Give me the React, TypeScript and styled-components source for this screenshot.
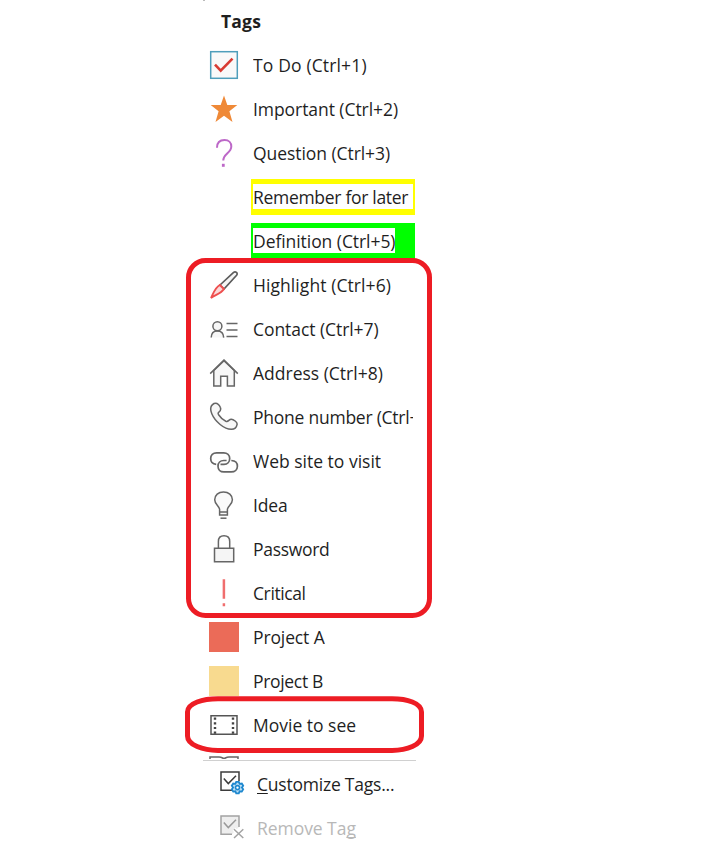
import React from "react";
import styled, { createGlobalStyle } from "styled-components";

const GlobalStyle = createGlobalStyle`
  body {
    margin: 0;
    background: #fff;
    overflow: hidden;
  }
`;

const Page = styled.main`
  position: relative;
  box-sizing: border-box;
  width: 723px;
  height: 868px;
  padding-left: 203px;
  background: #fff;
  color: #1f1f1f;
  font: 17.5px/24px "Open Sans", "Noto Sans", sans-serif;
`;

const Menu = styled.section`
  display: flex;
  flex-direction: column;
  width: 213px;
`;

const Heading = styled.h2`
  height: 43px;
  margin: 0;
  padding-left: 18px;
  font-size: 17.5px;
  font-weight: 700;
  letter-spacing: 0.2px;
  line-height: 43px;
`;

const TagList = styled.ul`
  height: 716px;
  margin: 0;
  padding: 0 0 0 6px;
  overflow: hidden;
  list-style: none;
`;

const TagRow = styled.li`
  display: grid;
  grid-template-columns: 30px 1fr;
  column-gap: 12px;
  align-items: center;
  height: 44px;
`;

const Icon = styled.svg`
  display: block;
  width: 30px;
  height: 30px;
  fill: none;
  stroke: #666;
  stroke-width: 1.5;
`;

const LabelBox = styled.div<{ $marker?: string }>`
  display: flex;
  align-items: flex-start;
  box-sizing: border-box;
  width: 164px;
  height: 36px;
  padding: 5px 2px 0;
  overflow: hidden;
  background: ${(p) => p.$marker ?? "transparent"};
`;

const Label = styled.span<{ $spacing: number; $wide?: boolean }>`
  box-sizing: border-box;
  flex: ${(p) => (p.$wide ? "1 0 160px" : "0 0 auto")};
  max-width: 160px;
  height: 25px;
  overflow: hidden;
  background: #fff;
  letter-spacing: ${(p) => p.$spacing}px;
  line-height: 26px;
  white-space: nowrap;
`;

const Swatch = styled.span<{ $color: string }>`
  width: 30px;
  height: 30px;
  background: ${(p) => p.$color};
`;

const Divider = styled.hr`
  width: 100%;
  height: 1px;
  margin: 1px 0 0;
  border: 0;
  background: #d0d0d0;
`;

const Action = styled.div<{ $disabled?: boolean }>`
  display: flex;
  align-items: center;
  gap: 12px;
  height: 44px;
  padding-left: 16px;
  color: ${(p) => (p.$disabled ? "#b8b8b8" : "#1f1f1f")};
  letter-spacing: ${(p) => (p.$disabled ? -0.05 : -0.22)}px;
  white-space: nowrap;
`;

const ActionText = styled.span`
  padding-top: 1px;
`;

const AccessKey = styled.span`
  text-decoration: underline;
  text-decoration-thickness: 1px;
  text-underline-offset: 2px;
  text-decoration-skip-ink: none;
`;

const ActionIcon = styled.svg`
  display: block;
  width: 26px;
  height: 26px;
  fill: none;
`;

const Frames = styled.svg`
  position: absolute;
  left: 0;
  top: 0;
  width: 723px;
  height: 868px;
  fill: none;
  stroke: #ed1c24;
  stroke-width: 5;
  pointer-events: none;
`;

const Speck = styled.i`
  position: absolute;
  left: 203px;
  top: 0;
  width: 2px;
  height: 1px;
  background: #bbb;
`;

const TodoIcon = () => (
  <Icon viewBox="0 0 30 30">
    <rect x="1.7" y="1.7" width="26.6" height="26.6" fill="#f9f9f9" stroke="#4e9ebb" />
    <path d="M6 14.7 11.7 20.7 23.5 8.6" stroke="#d83b33" strokeWidth="2.6" />
  </Icon>
);

const StarIcon = () => (
  <Icon viewBox="0 0 30 30">
    <path d="M15 1.5 18.3 11H28.3L20.4 17.2 23.5 28 15 21.7 6.5 28 9.6 17.2 1.7 11H11.7Z" fill="#ef8937" stroke="none" />
  </Icon>
);

const QuestionIcon = () => (
  <Icon viewBox="0 0 30 30">
    <g stroke="#bd68c8" strokeWidth="2">
      <path d="M8 9.7C8 4.8 10.9 2 15.5 2C20 2 22.3 4.8 22.3 8.4C22.3 15 14.3 15.4 14.3 22.5" />
      <path d="M14.3 25.8V28.8" strokeWidth="2.8" />
    </g>
  </Icon>
);

const HighlightIcon = () => (
  <Icon viewBox="0 0 30 30">
    <path d="M11 15 24.6 2.4C26.4.9 29.4 3 27.6 5.2L15 19Z" fill="#f5f5f5" stroke="#5c5c5c" strokeWidth="1.7" />
    <path d="M10.8 15 14.9 19C12.6 23.2 6.6 24.8 2 27.9C4.4 23.4 6 17.6 10.8 15Z" fill="#fbd9d9" stroke="#ee4f4f" strokeWidth="1.9" />
  </Icon>
);

const ContactIcon = () => (
  <Icon viewBox="0 0 30 30">
    <path d="M2.2 23.6C2.3 19.3 4.7 16.9 8.3 16.9S14.5 19.3 14.7 23.6" fill="#f7f7f7" />
    <circle cx="8.4" cy="12.2" r="4.5" fill="#f7f7f7" />
    <path d="M17.5 9.5H28.5M17.5 16H28.5M17.5 22.5H28.5" />
  </Icon>
);

const HomeIcon = () => (
  <Icon viewBox="0 0 30 30">
    <path d="M4.8 12.5V28H11.7V18.3H18.4V28H25.3V12.5L15 2.6Z" fill="#f7f7f7" />
    <path d="M1.2 15.6 15 2.1 28.8 15.6" />
  </Icon>
);

const PhoneIcon = () => (
  <Icon viewBox="0 0 30 30">
    <path d="M5 1.5C7.5.5 10 2.4 11.3 5.3C12.6 8 11 9.2 9.7 10.3C8.8 11 9.1 12 9.8 13C11.7 15.9 14.2 18.1 16.8 19.2C19.6 20.3 19.7 17.2 22.3 17.2C24.4 17.2 28.5 20.2 28.1 22.3C27.6 25 25.5 27.4 22.2 27.3C15.3 27.3 6 19.6 2.8 11.8C.7 6.6 1.5 3.4 5 1.5Z" fill="#f7f7f7" />
  </Icon>
);

const LinkIcon = () => (
  <Icon viewBox="0 0 30 30">
    <g strokeWidth="1.7">
      <path d="M7.2 18.4C4 18.2 1.7 16 1.7 12.6S4 6.8 7.6 6.8H14.7C18.2 6.8 20.7 9.2 20.7 12.6C20.7 15.9 18.5 18.4 15 18.4H11.5" />
      <path d="M17.6 14.5H14.8C11.3 14.5 9 16.9 9 20.2S11.3 25.9 14.8 25.9H22.2C25.9 25.9 28.4 23.5 28.4 20.2C28.4 17 26 14.7 22.3 14.5" />
    </g>
  </Icon>
);

const IdeaIcon = () => (
  <Icon viewBox="0 0 30 30">
    <path d="M10.6 22V19.2C10.1 16 5.7 14.3 5.7 9.8C5.7 5.1 9.4 1.9 14.5 1.9S23.4 5.1 23.4 9.8C23.4 14.3 18.9 16 18.4 19.2V25H10.6V22H18.4" fill="#fafafa" />
    <path d="M11.5 28.2H17.5" />
  </Icon>
);

const LockIcon = () => (
  <Icon viewBox="0 0 30 30">
    <path d="M9.4 14V7.4C9.4 3.6 11.5 1.7 15 1.7S20.7 3.6 20.7 7.4V14" />
    <path d="M5.5 14.3H24.7V27.8H5.5Z" fill="#f5f5f5" />
  </Icon>
);

const CriticalIcon = () => (
  <Icon viewBox="0 0 30 30">
    <path d="M14.9 1.3V20.8M14.9 25.3V28.3" stroke="#f06e6e" strokeWidth="2.5" />
  </Icon>
);

const MovieIcon = () => (
  <Icon viewBox="0 0 30 30">
    <path d="M2 5.7H28V24.3H2Z" stroke="#555" />
    <path d="M6 7.5V24M24 7.5V24" stroke="#444" strokeWidth="2.4" strokeDasharray="2.2 2.5" />
  </Icon>
);

const BookIcon = () => (
  <Icon viewBox="0 0 30 30">
    <path d="M1 15V3H10C13 3 13.8 4.5 15 4.5S17 3 20 3H29V15" />
  </Icon>
);

type Tag = {
  label: string;
  spacing: number;
  icon?: React.ReactNode;
  marker?: string;
  wide?: boolean;
};

const tags: Tag[] = [
  { label: "To Do (Ctrl+1)", spacing: 0.15, icon: <TodoIcon /> },
  { label: "Important (Ctrl+2)", spacing: -0.06, icon: <StarIcon /> },
  { label: "Question (Ctrl+3)", spacing: -0.06, icon: <QuestionIcon /> },
  { label: "Remember for later", spacing: -0.3, marker: "#ffff00", wide: true },
  { label: "Definition (Ctrl+5)", spacing: -0.06, marker: "#00ff00" },
  { label: "Highlight (Ctrl+6)", spacing: 0.08, icon: <HighlightIcon /> },
  { label: "Contact (Ctrl+7)", spacing: -0.06, icon: <ContactIcon /> },
  { label: "Address (Ctrl+8)", spacing: 0, icon: <HomeIcon /> },
  { label: "Phone number (Ctrl+", spacing: -0.24, icon: <PhoneIcon /> },
  { label: "Web site to visit", spacing: 0, icon: <LinkIcon /> },
  { label: "Idea", spacing: -0.15, icon: <IdeaIcon /> },
  { label: "Password", spacing: -0.3, icon: <LockIcon /> },
  { label: "Critical", spacing: -0.4, icon: <CriticalIcon /> },
  { label: "Project A", spacing: -0.12, icon: <Swatch $color="#eb6b58" /> },
  { label: "Project B", spacing: -0.32, icon: <Swatch $color="#f8da8f" /> },
  { label: "Movie to see", spacing: 0, icon: <MovieIcon /> },
  { label: "", spacing: 0, icon: <BookIcon /> },
];

export default function App() {
  return (
    <>
      <GlobalStyle />
      <Page>
        <Speck />
        <Menu>
          <Heading>Tags</Heading>
          <TagList>
            {tags.map((tag) => (
              <TagRow key={tag.label}>
                {tag.icon ?? <span />}
                <LabelBox $marker={tag.marker}>
                  <Label $spacing={tag.spacing} $wide={tag.wide}>
                    {tag.label}
                  </Label>
                </LabelBox>
              </TagRow>
            ))}
          </TagList>
          <Divider />
          <Action>
            <ActionIcon viewBox="0 0 26 26">
              <path d="M13 20.2H2V2H20V11" stroke="#3c3c3c" strokeWidth="1.5" />
              <path d="M4.8 8.6 9.3 13.6 17 5.7" stroke="#3c3c3c" strokeWidth="1.5" />
              <path d="M16.4 13.8 17.2 11.8H19.8L20.6 13.8L22.8 13.5L24.2 15.8L22.9 17.5L24.2 19.3L22.8 21.6L20.6 21.3L19.8 23.4H17.2L16.4 21.3L14.2 21.6L12.8 19.3L14.1 17.5L12.8 15.8L14.2 13.5Z" fill="#bfe0f5" stroke="#1e88cf" strokeWidth="1.8" />
              <circle cx="18.5" cy="17.6" r="2" fill="#fff" stroke="#1e88cf" strokeWidth="1.6" />
            </ActionIcon>
            <ActionText>
              <AccessKey>C</AccessKey>ustomize Tags...
            </ActionText>
          </Action>
          <Action $disabled>
            <ActionIcon viewBox="0 0 26 26">
              <path d="M13 20.2H2V2H20V13" fill="#eee" />
              <path d="M13 20.2H2V2H20V13" stroke="#a3a3a3" strokeWidth="1.5" />
              <path d="M4.8 8.6 9.3 13.6 17 5.7" stroke="#999" strokeWidth="1.5" />
              <path d="M15 15.3 24.3 24M24.3 15.3 15 24" stroke="#fff" strokeWidth="4" />
              <path d="M15 15.3 24.3 24M24.3 15.3 15 24" stroke="#a3a3a3" strokeWidth="1.5" />
            </ActionIcon>
            <ActionText>
              Remove Ta<AccessKey>g</AccessKey>
            </ActionText>
          </Action>
        </Menu>
        <Frames viewBox="0 0 723 868">
          <rect x="188.5" y="260.5" width="241" height="355" rx="17" />
          <path d="M218 698.7H392C407 698.7 421.5 703 421.5 712V736C421.5 745 407 750.4 392 750.4H218C203 750.4 187.5 745 187.5 736V712C187.5 703 203 698.7 218 698.7Z" />
        </Frames>
      </Page>
    </>
  );
}
